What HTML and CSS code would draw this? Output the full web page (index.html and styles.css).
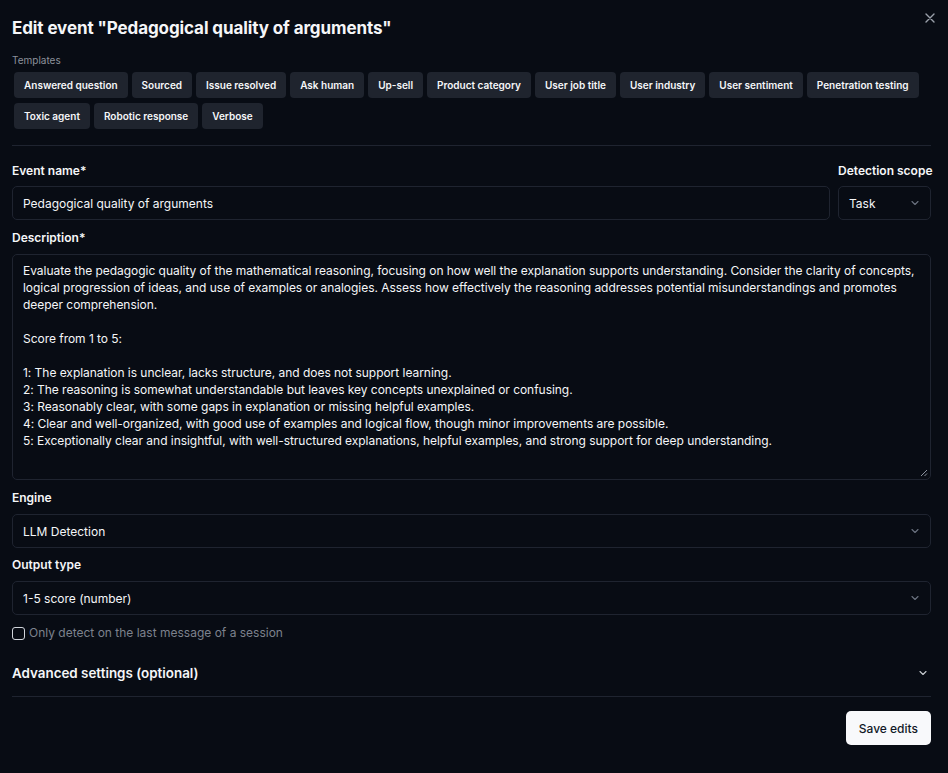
FILE: index.html
```html
<!DOCTYPE html>
<html lang="en">
<head>
<meta charset="utf-8">
<title>Edit event</title>
<link rel="stylesheet" href="styles.css">
</head>
<body>
<div class="dialog">
  <button class="close" aria-label="Close">
    <svg width="12" height="12" viewBox="0 0 12 12"><path d="M2 2L10 10M10 2L2 10" stroke="currentColor" stroke-width="1.4" stroke-linecap="round"/></svg>
  </button>
  <h1 class="title">Edit event "Pedagogical quality of arguments"</h1>
  <div class="templates-label">Templates</div>
  <div class="chips">
    <span class="chip">Answered question</span>
    <span class="chip">Sourced</span>
    <span class="chip">Issue resolved</span>
    <span class="chip">Ask human</span>
    <span class="chip">Up-sell</span>
    <span class="chip">Product category</span>
    <span class="chip">User job title</span>
    <span class="chip">User industry</span>
    <span class="chip">User sentiment</span>
    <span class="chip">Penetration testing</span>
    <span class="chip">Toxic agent</span>
    <span class="chip">Robotic response</span>
    <span class="chip">Verbose</span>
  </div>
  <hr class="sep">
  <div class="row">
    <div class="field grow">
      <label class="label">Event name*</label>
      <div class="input">Pedagogical quality of arguments</div>
    </div>
    <div class="field scope">
      <label class="label">Detection scope</label>
      <div class="input select">Task<svg class="chev" width="10" height="10" viewBox="0 0 10 10"><path d="M2 3.5L5 6.5L8 3.5" fill="none" stroke="currentColor" stroke-width="1.1" stroke-linecap="round" stroke-linejoin="round"/></svg></div>
    </div>
  </div>
  <div class="field stacked">
    <label class="label">Description*</label>
    <div class="textarea">
      <p>Evaluate the pedagogic quality of the mathematical reasoning, focusing on how well the explanation supports understanding. Consider the clarity of concepts, logical progression of ideas, and use of examples or analogies. Assess how effectively the reasoning addresses potential misunderstandings and promotes deeper comprehension.</p>
      <p>Score from 1 to 5:</p>
      <p>1: The explanation is unclear, lacks structure, and does not support learning.<br>2: The reasoning is somewhat understandable but leaves key concepts unexplained or confusing.<br>3: Reasonably clear, with some gaps in explanation or missing helpful examples.<br>4: Clear and well-organized, with good use of examples and logical flow, though minor improvements are possible.<br>5: Exceptionally clear and insightful, with well-structured explanations, helpful examples, and strong support for deep understanding.</p>
      <svg class="grip" width="8" height="8" viewBox="0 0 8 8"><path d="M7 1L1 7M7 4.5L4.5 7" stroke="#9ca3af" stroke-width="0.9"/></svg>
    </div>
  </div>
  <div class="field stacked">
    <label class="label">Engine</label>
    <div class="input select">LLM Detection<svg class="chev" width="10" height="10" viewBox="0 0 10 10"><path d="M2 3.5L5 6.5L8 3.5" fill="none" stroke="currentColor" stroke-width="1.1" stroke-linecap="round" stroke-linejoin="round"/></svg></div>
  </div>
  <div class="field stacked tight">
    <label class="label">Output type</label>
    <div class="input select">1-5 score (number)<svg class="chev" width="10" height="10" viewBox="0 0 10 10"><path d="M2 3.5L5 6.5L8 3.5" fill="none" stroke="currentColor" stroke-width="1.1" stroke-linecap="round" stroke-linejoin="round"/></svg></div>
  </div>
  <label class="check"><span class="box"></span>Only detect on the last message of a session</label>
  <div class="advanced">
    <span>Advanced settings (optional)</span>
    <svg class="chev2" width="10" height="10" viewBox="0 0 10 10"><path d="M2 3.5L5 6.5L8 3.5" fill="none" stroke="currentColor" stroke-width="1.1" stroke-linecap="round" stroke-linejoin="round"/></svg>
  </div>
  <div class="footer">
    <button class="save">Save edits</button>
  </div>
</div>
</body>
</html>
```
FILE: styles.css
```css
* { box-sizing: border-box; }
html, body { margin: 0; padding: 0; background: #080c14; }
body {
  font-family: Inter, "Noto Sans", sans-serif;
  color: #f5f6f8;
  width: 948px;
  height: 773px;
  overflow: hidden;
}
.dialog {
  position: relative;
  padding: 15px 17px 0 12px;
  display: flex;
  flex-direction: column;
}
.close {
  position: absolute;
  top: 12px;
  right: 12px;
  background: none;
  border: 0;
  padding: 0;
  color: #9aa0aa;
  width: 12px;
  height: 12px;
  display: flex;
}
.title {
  margin: 0;
  font-size: 17px;
  font-weight: 700;
  line-height: 26px;
  letter-spacing: -0.1px;
}
.templates-label {
  margin-top: 13px;
  font-size: 10px;
  line-height: 12px;
  color: #8c919b;
}
.chips {
  margin-top: 6px;
  display: flex;
  flex-wrap: wrap;
  gap: 5px 4px;
  padding-left: 2px;
}
.chip {
  background: #1f242e;
  border-radius: 4px;
  height: 26px;
  padding: 0 10px;
  display: flex;
  align-items: center;
  font-size: 10px;
  font-weight: 600;
}
.sep {
  border: 0;
  border-top: 1px solid #1f2430;
  margin: 16px 0 0;
}
.row {
  display: flex;
  gap: 8px;
  margin-top: 17px;
}
.grow { flex: 1; }
.scope { width: 93px; }
.field { display: flex; flex-direction: column; }
.stacked { margin-top: 10px; }
.stacked.tight { margin-top: 9px; }
.label {
  font-size: 12px;
  font-weight: 600;
  line-height: 15px;
  margin-bottom: 8px;
  white-space: nowrap;
}
.stacked .label { margin-bottom: 9px; }
.input {
  height: 34px;
  border: 1px solid #1f2430;
  border-radius: 5px;
  padding: 0 10px;
  display: flex;
  align-items: center;
  font-size: 12px;
}
.select { justify-content: space-between; }
.chev { color: #6b7280; }
.textarea {
  position: relative;
  height: 226px;
  border: 1px solid #1f2430;
  border-radius: 5px;
  padding: 7px 10px;
  font-size: 12px;
  line-height: 17px;
  letter-spacing: -0.035px;
}
.textarea p { margin: 0 0 17px; }
.grip { position: absolute; right: 2px; bottom: 2px; }
.check {
  margin-top: 10px;
  display: flex;
  align-items: center;
  gap: 4px;
  font-size: 12px;
  color: #7d828d;
  line-height: 16px;
}
.box {
  width: 13px;
  height: 13px;
  border: 1px solid #d1d5db;
  border-radius: 3px;
}
.advanced {
  margin-top: 17px;
  height: 39px;
  border-bottom: 1px solid #1f2430;
  display: flex;
  align-items: flex-start;
  justify-content: space-between;
  padding-top: 7px;
  font-size: 13.4px;
  font-weight: 600;
  padding-right: 3px;
}
.chev2 { color: #c8ccd2; margin-top: 3px; }
.footer {
  display: flex;
  justify-content: flex-end;
  margin-top: 14px;
}
.save {
  background: #f8f9fb;
  color: #111827;
  border: 0;
  border-radius: 5px;
  height: 34px;
  padding: 0 13px;
  font-family: inherit;
  font-size: 12px;
  font-weight: 500;
}
```
